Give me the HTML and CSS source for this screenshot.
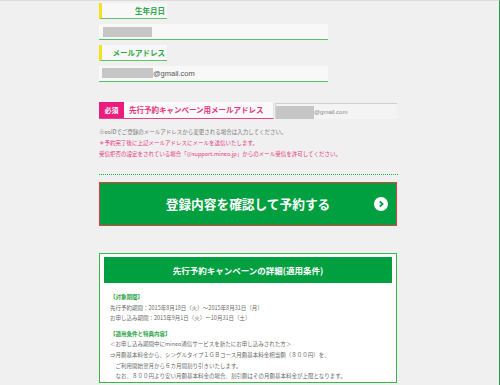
FILE: index.html
```html
<!DOCTYPE html>
<html lang="ja">
<head>
<meta charset="utf-8">
<link rel="stylesheet" href="styles.css">
</head>
<body>
<div class="page">
  <div class="col">
    <div class="label">生年月日</div>
    <div class="field"><span class="mask mask-a"></span></div>
    <div class="label">メールアドレス</div>
    <div class="field"><span class="mask mask-b"></span><span class="mail">@gmail.com</span></div>

    <div class="req-row">
      <div class="req-label"><span class="req-badge">必須</span><span class="req-text">先行予約キャンペーン用メールアドレス</span></div>
      <div class="req-input"><span class="mask mask-c"></span><span class="mail-s">@gmail.com</span></div>
    </div>

    <div class="notes">
      <p class="note-gray">※eoIDでご登録のメールアドレスから変更される場合は入力してください。</p>
      <p class="note-pink">＊予約完了後に上記メールアドレスにメールを送信いたします。</p>
      <p class="note-pink">受信拒否の設定をされている場合「@support.mineo.jp」からのメール受信を許可してください。</p>
    </div>

    <div class="dots"></div>

    <button class="submit">登録内容を確認して予約する
      <span class="arrow"><svg width="14" height="14" viewBox="0 0 14 14"><circle cx="7" cy="7" r="7" fill="#fff"/><path d="M5.8 4.3 L8.5 7 L5.8 9.7" fill="none" stroke="#00a040" stroke-width="1.9"/></svg></span>
    </button>

    <div class="detail">
      <div class="detail-head">先行予約キャンペーンの詳細(適用条件)</div>
      <div class="detail-body">
        <p class="sub">【対象期間】</p>
        <p>先行予約期間：2015年8月18日（火）～2015年8月31日（月）</p>
        <p>お申し込み期間：2015年9月1日（火）ー10月31日（土）</p>
        <p class="sub gap">【適用条件と特典内容】</p>
        <p>＜お申し込み期間中にmineo通信サービスを新たにお申し込みされた方＞</p>
        <p>⇒月額基本料金から、シングルタイプ１ＧＢコース月額基本料金相当額（８００円）を、</p>
        <p>　ご利用開始翌月から６カ月間割り引きいたします。</p>
        <p>　なお、８００円より安い月額基本料金の場合、割引額はその月額基本料金が上限となります。</p>
      </div>
    </div>
  </div>
</div>
</body>
</html>
```

FILE: styles.css
```css
html, body {
  margin: 0;
  padding: 0;
}
body {
  background: #f0f0f0;
  font-family: "Noto Sans CJK JP", "Noto Sans", sans-serif;
}
.page {
  width: 499px;
  height: 384px;
  border-top: 1px solid #dcdcdc;
  border-right: 1px solid #1f9a3c;
  overflow: hidden;
  background: #f0f0f0;
}
.col {
  margin-left: 99px;
  width: 299px;
  padding-top: 2px;
  display: flex;
  flex-direction: column;
  align-items: flex-start;
}
p { margin: 0; }

.label {
  width: 63px;
  height: 15px;
  border-left: 3px solid #f5e21c;
  border-bottom: 1px solid #5cc46f;
  background: #f8f8f8;
  color: #2ea44a;
  font-size: 7.5px;
  font-weight: bold;
  line-height: 15px;
  text-align: right;
  padding-right: 2px;
  margin-bottom: 5px;
}
.field {
  width: 229px;
  height: 15px;
  background: #f8f8f8;
  border-bottom: 1.5px solid #55c06a;
  display: flex;
  align-items: center;
  margin-bottom: 4.5px;
}
.mask {
  display: block;
  background: #c6c6c6;
}
.mask-a { width: 49px; height: 10px; margin-left: 4px; }
.mask-b { width: 51px; height: 10px; margin-left: 3px; }
.mail {
  font-family: "Liberation Sans", Arial, sans-serif;
  font-size: 7.5px;
  color: #555;
}

.req-row {
  margin-top: 16px;
  display: flex;
  align-items: flex-start;
}
.req-label {
  display: flex;
  width: 174px;
  height: 16px;
  border-bottom: 1px solid #e9428a;
  border-right: 1px solid #e2e2e2;
  background: #fafafa;
}
.req-badge {
  width: 25px;
  background: #e91e7c;
  color: #fff;
  font-size: 7px;
  font-weight: bold;
  line-height: 16px;
  text-align: center;
}
.req-text {
  padding-left: 5px;
  color: #e6337f;
  font-size: 7.5px;
  font-weight: bold;
  line-height: 16px;
}
.req-input {
  margin-left: 1px;
  margin-top: 1px;
  width: 121px;
  height: 15px;
  border-top: 1px solid #cfcfcf;
  border-left: 1px solid #d6d6d6;
  background: #f4f4f4;
  display: flex;
  align-items: flex-end;
}
.mask-c { width: 38px; height: 13px; }
.mail-s {
  font-family: "Liberation Sans", Arial, sans-serif;
  font-size: 6px;
  color: #8a8a8a;
  align-self: center;
}

.notes {
  margin-top: 7.5px;
  font-size: 5.5px;
  line-height: 11px;
}
.note-gray { color: #777; }
.note-pink { color: #e6337f; }

.dots {
  margin-top: 14px;
  width: 299px;
  border-top: 1px dotted #1fb347;
}
.submit {
  position: relative;
  margin-top: 7px;
  width: 298px;
  height: 44px;
  border: 1.5px solid #e8383d;
  background: #00a040;
  color: #fff;
  font-family: "Noto Sans CJK JP", sans-serif;
  font-size: 12.7px;
  font-weight: bold;
  padding: 0;
  line-height: 40px;
  text-align: center;
}
.arrow {
  position: absolute;
  right: 8px;
  top: 14px;
  width: 14px;
  height: 14px;
  display: block;
}
.arrow svg { display: block; }

.detail {
  margin-top: 27px;
  width: 288px;
  border: 1.5px solid #3bb54a;
  background: #fff;
  padding: 3px 4px 0 4px;
}
.detail-head {
  height: 26px;
  background: #00a040;
  color: #fff;
  font-size: 8.5px;
  font-weight: bold;
  line-height: 26px;
  text-align: center;
}
.detail-body {
  padding: 9.5px 0 0 6px;
  font-size: 5.5px;
  line-height: 10.7px;
  color: #6a6a6a;
}
.sub {
  color: #2ea44a;
  font-weight: bold;
}
.gap { margin-top: 4.5px; }
```
